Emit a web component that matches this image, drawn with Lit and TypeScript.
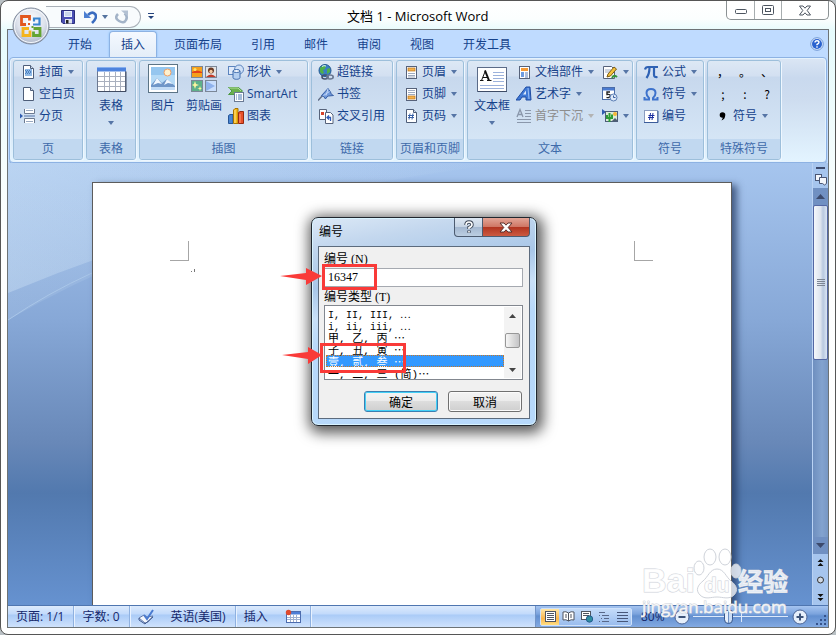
import { LitElement, html, css, svg, nothing } from "lit";
import { customElement, property } from "lit/decorators.js";
import { classMap } from "lit/directives/class-map.js";

const I = (body: unknown, w = 16, h = 16) =>
  html`<svg width=${w} height=${h} viewBox="0 0 ${w} ${h}" aria-hidden="true">${body}</svg>`;

const sheet = svg`<path d="M3.5 1.5h7l3 3v10h-10z" fill="#fff" stroke="#4d5d78"/><path d="M10.500 1.500v3h3" fill="#cfdcee" stroke="#4d5d78"/>`;
const plainSheet = svg`<rect x="3.500" y="2.500" width="10" height="12" fill="#fff" stroke="#56627a"/>`;

const icons: Record<string, unknown> = {
  cover: I(svg`${sheet}<rect x="5" y="5" width="7" height="7" fill="#8fb9e6"/><path d="M5 6l2 2-2 2m2-4l2 2-2 2m2-4l2 2-2 2" stroke="#3d72b5" stroke-width=".8" fill="none"/>`),
  blank: I(sheet),
  pagebreak: I(svg`<path d="M0 5.500l3 2.500-3 2.500z" fill="#2f5cb0"/><path d="M4.500 1v4.500h10V1M4.500 15v-4.500h10V15" fill="#fff" stroke="#6c7a90"/><path d="M6 2.500h7M6 13.500h7" stroke="#9aa9c0"/><path d="M4 8h11" stroke="#5775a8"/>`),
  shapes: I(svg`<rect x=".5" y="2.500" width="8" height="8" fill="#dfeafa" stroke="#5b84be"/><circle cx="11" cy="5.500" r="4.500" fill="#cfe0f6" stroke="#5b84be"/><path d="M5 7v6.500c0 2.400 7 2.400 7 0V7z" fill="#b4cff0" stroke="#416eae"/><ellipse cx="8.500" cy="7" rx="3.500" ry="1.500" fill="#f2f8ff" stroke="#416eae"/>`),
  smartart: I(svg`<path d="M.5 1.500h10l4 3.500-4 3.500H.5L4 5z" fill="#6bb04f" stroke="#4f9a45"/><path d="M1 2h9l3 3" stroke="#b2dd98" fill="none"/><rect x="6.500" y="6.500" width="9" height="9" fill="#fff" stroke="#6a7a94"/><path d="M8 9h1m1 0h4M8 11h1m1 0h4M8 13h1m1 0h4" stroke="#4a7ab5"/>`),
  chart: I(svg`<path d="M.5 7.500l1.500-1h3v9H.5z" fill="#4a86d2" stroke="#265596"/><path d="M5.500 2l1.500-1.500h3v15H5.500z" fill="#f5b818" stroke="#a87300"/><path d="M7 2v13" stroke="#ffe28a"/><path d="M10.500 4.500l1.500-1h3.500v12h-5z" fill="#e8502a" stroke="#97290f"/><path d="M12 6v9" stroke="#ff9c78"/>`),
  link: I(svg`<circle cx="7" cy="6.500" r="6" fill="#3a7fc4" stroke="#21598f"/><path d="M2 4c2-3 5-3 6-2l-1 3-2 1 1 3-2 1-2-2zM9 5l3-1v4l-3 2z" fill="#4fb04a"/><path d="M4 2.500q2-1.500 4-.5" stroke="#dff3ff" fill="none"/><ellipse cx="7" cy="13" rx="3" ry="2" fill="none" stroke="#45526b" stroke-width="1.600"/><ellipse cx="12" cy="13" rx="3.200" ry="2" fill="none" stroke="#6a7890" stroke-width="1.600"/>`),
  bookmark: I(svg`<path d="M0 14.500L5 9" stroke="#5f6c86" stroke-width="1.400"/><path d="M10 2.500l-6.500 7q2.500.5 4 3.500 1-2.500 3-3l5-.5q-3-1-3-3.500z" fill="#6f98da" stroke="#3a61a6"/><path d="M10 3l-2 6.500M5.500 9.500l6-4" stroke="#c4d8f8"/>`),
  crossref: I(svg`<path d="M1.500 1.500h7v10h-7z" fill="#fff" stroke="#56627a"/><rect x="3" y="4" width="3" height="3" fill="#d8432a"/><path d="M7.500 4.500h5l2.500 2.500v8.500H7.500z" fill="#fff" stroke="#56627a"/><path d="M12.500 13v-3.500h-3m1.500-2l-2 2 2 2" stroke="#2d5bb8" fill="none" stroke-width="1.300"/>`),
  header: I(svg`${plainSheet}<rect x="5" y="4" width="7" height="3" fill="#f6b34c" stroke="#b9731a" stroke-width=".7"/><path d="M5 9.500h7M5 11.500h7M5 13h7" stroke="#9fabc0"/>`),
  footer: I(svg`${plainSheet}<path d="M5 4.500h7M5 6.500h7M5 8.500h7" stroke="#9fabc0"/><rect x="5" y="10" width="7" height="3" fill="#f6b34c" stroke="#b9731a" stroke-width=".7"/>`),
  pageno: I(svg`${sheet}<path d="M7 5.500l-1 6M10 5.500l-1 6M5 7.500h6M5 9.500h6" stroke="#3a62a8" fill="none"/>`),
  parts: I(svg`${plainSheet}<rect x="5" y="4" width="7" height="3" fill="#f59a36"/><rect x="5" y="8" width="3" height="5" fill="#6d9be0"/><path d="M9 9h3M9 11h3M9 13h3" stroke="#5c7fb8"/>`),
  wordart: I(svg`<path d="M0 14L10 1h4l1 13h-5v-3H6l-2 3z" fill="#3f79d6" stroke="#1f4ca2"/><path d="M7 8.500h3V4.500z" fill="#dce9fb"/><path d="M12 2l1 11" stroke="#9cc0f5"/>`),
  dropcap: I(svg`<path d="M1 9L4 1.500 7 9M2 6.500h4" stroke="#8a97ab" stroke-width="1.300" fill="none"/><path d="M9 2.500h6M9 5.500h6M9 8.500h6M1 11.500h14M1 14.500h14" stroke="#8a97ab"/>`),
  signature: I(svg`<path d="M1.500 2.500h8l3 3v9h-11z" fill="#fff" stroke="#56627a"/><path d="M3 6h6M3 8h6" stroke="#9fabc0"/><path d="M5 13l1-3 6-7 2.500 2-6 7z" fill="#f4c23c" stroke="#7c5b10"/><path d="M10 14q2-4 5-1" stroke="#35963b" stroke-width="2" fill="none"/>`),
  date: I(svg`<rect x=".5" y="1.500" width="12" height="12" fill="#fff" stroke="#4b6da8"/><rect x="1" y="2" width="11" height="2.500" fill="#4a7bd0"/><path d="M8 6H5v2.500c3-.5 3.500.5 3.300 1.700S6 12 4.500 11.300" stroke="#222" stroke-width="1.400" fill="none"/><circle cx="11.500" cy="11.500" r="3.500" fill="#dfeaf9" stroke="#5d7fb4"/><path d="M11.500 9.500v2h2" stroke="#385e9e" fill="none"/>`),
  object: I(svg`<path d="M0 1l4 3-4 3z" fill="#2f5cb0"/><rect x="3.500" y="3.500" width="12" height="10" fill="#dcebd8" stroke="#4d5d78"/><circle cx="13" cy="6" r="2" fill="#f5b636"/><path d="M7.500 14V5M5 7v3h5V6.500" stroke="#2e9b35" stroke-width="2" fill="none"/><path d="M10 13l3-3 2 2v1z" fill="#4f5f70"/>`),
  pi: I(svg`<path d="M2 5.500Q2.500 3 5 3h10" stroke="#2f62b4" stroke-width="2.200" fill="none"/><path d="M6.500 3.500Q6.500 10 3.500 14M11 3.500V11q0 2.500 3.500 2" stroke="#2f62b4" stroke-width="2.200" fill="none"/>`),
  omega: I(svg`<path d="M1.500 11v2.500H6v-1.500Q3.500 10 3.500 7 3.500 3 8 3t4.500 4q0 3-2.500 5v1.500h4.500V11" stroke="#3d72cc" stroke-width="2" fill="none"/>`),
  number: I(svg`<rect x="1.500" y="2.500" width="13" height="12" fill="#fff" stroke="#8a9cc0"/><path d="M1 14.500h14V3" stroke="#3b5c9a" fill="none"/><path d="M7.500 5l-1 7M10 5l-1 7M5.500 7.500h6M5 9.500h6" stroke="#1c2fa0"/>`),
  comma: I(svg`<circle cx="8.500" cy="7" r="2.800" fill="#000"/><path d="M11 7q.5 4-3.500 5.500Q9.500 10 8.500 8z" fill="#000"/>`),
};

const big: Record<string, unknown> = {
  table: I(svg`<rect x="2.500" y="4.500" width="28" height="24" fill="#fff" stroke="#6c7890"/><rect x="2" y="4" width="29" height="4.500" fill="#4e83dd"/><path d="M2 4.500h29" stroke="#86afee"/><path d="M3 13.500h27M3 18.500h27M3 23.500h27M9.500 9v19M14.500 9v19M20.500 9v19M25.500 9v19" stroke="#a9b0be"/><path d="M3 28.500h28v-20" stroke="#414c62" fill="none"/>`, 32, 32),
  picture: I(svg`<rect x="1.500" y="1.500" width="29" height="28" fill="#fff" stroke="#5c7486"/><rect x="4" y="4" width="24" height="23" fill="#b5daf6"/><rect x="4" y="4" width="24" height="8" fill="#95c6ef"/><circle cx="20.500" cy="9.500" r="3.500" fill="#fff1ce" stroke="#f0a064"/><path d="M4 22l6-7 5 5 5-4 8 7v4H4z" fill="#6f96c8"/><path d="M10 15l5 6-4-1-5 2zM20 16l6 5-5-1-4 2z" fill="#f0f7ff"/><path d="M4 24h24v3H4z" fill="#c3dcf6"/>`, 32, 32),
  clip: I(svg`<rect x="3.500" y="3.500" width="11" height="11" fill="#f5a01c" stroke="#7b8797"/><path d="M4 9q5-3 10 0v1H4z" fill="#e3401a"/><circle cx="7" cy="6.500" r="1.500" fill="#ffe468"/><rect x="17.500" y="3.500" width="11" height="11" fill="#e4e4e4" stroke="#7b8797"/><circle cx="23" cy="7.500" r="3" fill="#6b3a24"/><circle cx="23" cy="8.500" r="1.700" fill="#f3c79c"/><path d="M18 14q5-5 10 0z" fill="#c23a26"/><rect x="3.500" y="17.500" width="11" height="11" fill="#5eb08b" stroke="#7b8797"/><path d="M7 18l1 3 3 1-3 1-1 3-1-3-2-1 2-1zM12 23l.7 2 1.300.5-1.300.5-.7 2-.7-2-2-.5 2-.5z" fill="#fdf6a0"/><rect x="17.500" y="17.500" width="11" height="11" fill="#c9defc" stroke="#7b8797"/><path d="M18 18l9 5-9 5z" fill="#8fb2ec"/>`, 32, 32),
  textbox: I(svg`<rect x="2.500" y="4.500" width="29" height="24" fill="#fff" stroke="#5b6b88"/><path d="M3 28.500h29" stroke="#3e4c66"/><path d="M6.500 17.500l4-10" stroke="#111" fill="none"/><path d="M10 7.500l4 10" stroke="#111" stroke-width="2" fill="none"/><path d="M8 14.500h5M5 17.500h3.500M12 17.500h4.500" stroke="#111"/><path d="M18 9.500h11M18 12.500h11M18 15.500h11M18 18.500h11M5 22.500h24M5 25.500h24" stroke="#9cb2dc"/>`, 34, 32),
};

interface Item { icon: string; text?: string; menu?: boolean; off?: boolean; label?: string }

@customElement("ribbon-button")
class RibbonButton extends LitElement {
  static styles = css`
    :host { display: block; }
    .small, .large {
      border: 0; background: none; padding: 0; margin: 0; color: #15428b;
      font: 12px/22px "Open Sans", "Noto Sans CJK SC", sans-serif; white-space: nowrap;
    }
    .small { display: flex; align-items: center; gap: 3px; height: 22px; }
    .large { display: flex; flex-direction: column; align-items: center; width: 100%; padding-top: 2px; }
    .off { color: #8d8d8d; }
    svg { display: block; flex: none; }
    .caret { flex: none; width: 6px; height: 4px; background: #5675a6; clip-path: polygon(0 0, 100% 0, 50% 100%); margin-left: 2px; }
    .large .caret { margin: 4px 0 0; }
    .off .caret { background: #b3b3b3; }
  `;
  @property({ attribute: false }) item: Item = { icon: "" };
  @property({ type: Boolean }) large = false;
  render() {
    const { icon, text, menu, off, label } = this.item;
    return html`<button
      class=${classMap({ small: !this.large, large: this.large, off: !!off })}
      ?disabled=${off} aria-label=${label ?? text ?? ""}>
      ${this.large ? big[icon] : icons[icon]}
      ${text ? html`<span>${text}</span>` : nothing}
      ${menu ? html`<i class="caret"></i>` : nothing}
    </button>`;
  }
}

@customElement("number-dialog")
class NumberDialog extends LitElement {
  static styles = css`
    :host { display: block; box-sizing: border-box; width: 226px; border: 1px solid #20262e; border-radius: 7px;
      background: linear-gradient(170deg, #dbe8f6 0, #c3d7ee 30px, #a9c7e8 70px, #c9e0f8 100px, #b7d8fa 130px, #b7d9fb 100%);
      box-shadow: inset 0 0 0 1px #d8f3ff, 2px 3px 14px 4px rgba(0, 0, 0, .65);
      padding: 0 6px 6px; color: #000; font: 12px/14px "Liberation Serif", "Noto Sans CJK SC", serif; }
    * { box-sizing: border-box; }
    .title { display: flex; height: 28px; }
    .title h2 { flex: 1; margin: 0; padding: 5px 0 0 1px; font: 12px/16px "Noto Sans CJK SC", sans-serif; }
    .ctl { height: 19px; border: 1px solid #4c5b70; border-top: 0; padding: 0; display: grid; place-items: center; }
    .help { width: 29px; border-radius: 0 0 0 4px; background: linear-gradient(#dde7f2, #c5d3e4 50%, #a3b7d0 50%, #bccee2); }
    .close { width: 47px; border-left: 0; border-radius: 0 0 4px 0; background: linear-gradient(#e2a597, #cf7563 50%, #b1331f 50%, #cc5a41); }
    .client { border: 1px solid #5c6b7d; background: #f0f0f0; padding: 4px 6px 6px 5px; }
    label { display: block; height: 16px; line-height: 16px; }
    .field { display: block; width: 100%; height: 19px; margin: 1px 0 2px; border: 1px solid #a5a9b0; border-radius: 0; padding: 0 3px;
      font: inherit; background: #fff; outline: 0; }
    .list { display: flex; height: 75px; border: 1px solid #82878f; background: #fff; padding: 1px; }
    select { flex: 1; min-width: 0; height: 72px; border: 0; padding: 0; outline: 0; overflow: hidden; background: #fff;
      border-radius: 0; font: 11px/12px "Liberation Mono", "Noto Sans CJK SC", monospace; scrollbar-width: none; color: #000; }
    option { display: flex; align-items: center; overflow: visible; height: 12px; min-height: 12px; line-height: 12px; padding: 0 2px; white-space: pre; color: #000; }
    .latin { font-size: 10px; }
    option:checked { background: linear-gradient(#3399ff, #3399ff); -webkit-text-fill-color: #fff; outline: 1px dotted #c87828; outline-offset: -1px; }
    .bar { width: 17px; display: flex; flex-direction: column; align-items: center; background: #f3f3f3; padding: 7px 0 6px; }
    .up, .down { width: 7px; height: 4px; background: #444; clip-path: polygon(50% 0, 100% 100%, 0 100%); }
    .down { clip-path: polygon(0 0, 100% 0, 50% 100%); margin-top: auto; }
    .thumb { width: 15px; height: 15px; margin-top: 15px; border: 1px solid #979797; border-radius: 2px; background: linear-gradient(90deg, #f6f6f6, #dcdcdc 50%, #c4c4c6); }
    .actions { display: flex; justify-content: flex-end; gap: 10px; padding: 11px 1px 0 0; }
    .actions button { width: 74px; height: 21px; padding: 0; border: 1px solid #707070; border-radius: 3px; font: 12px/17px "Noto Sans CJK SC", sans-serif; color: #000;
      background: linear-gradient(#f3f3f3, #ebebeb 50%, #dddddd 50%, #cfcfcf); box-shadow: inset 0 0 0 1px #fbfbfb; }
    .actions .ok { border-color: #3c7fb1; box-shadow: inset 0 0 0 1px #43d0f7; }
  `;
  render() {
    return html`
      <div class="title">
        <h2>编号</h2>
        <button class="ctl help" aria-label="帮助">${I(svg`<path d="M4 5q0-3 3-3t3 2.700Q10 6.500 7 7.500V9M7 10.500v2.200" stroke="#3c4656" stroke-width="3.400" fill="none"/><path d="M4 5q0-3 3-3t3 2.700Q10 6.500 7 7.500V9M7 11v1.500" stroke="#fff" stroke-width="1.600" fill="none"/>`, 14, 14)}</button>
        <button class="ctl close" aria-label="关闭">${I(svg`<path d="M1 1h4l2 2.200L9 1h4L9.200 5.500 13 10H9L7 7.800 5 10H1l3.800-4.500z" fill="#fff" stroke="#57302c"/>`, 14, 11)}</button>
      </div>
      <div class="client">
        <label for="num">编号 (N)</label>
        <input class="field" id="num" type="text" value="16347" />
        <label for="kind">编号类型 (T)</label>
        <div class="list">
          <select id="kind" size="6">
            <option class="latin">I, II, III, ⋯</option>
            <option class="latin">i, ii, iii, ⋯</option>
            <option>甲, 乙, 丙 ⋯</option>
            <option>子, 丑, 寅 ⋯</option>
            <option selected>壹, 贰, 叁 ⋯</option>
            <option>一, 二, 三 (简)⋯</option>
          </select>
          <div class="bar"><i class="up"></i><i class="thumb"></i><i class="down"></i></div>
        </div>
        <div class="actions"><button class="ok">确定</button><button>取消</button></div>
      </div>`;
  }
}

@customElement("app-root")
class AppRoot extends LitElement {
  static styles = css`
    :host { display: block; background: #b9c0c4; color: #15428b; font: 12px/16px "Open Sans", "Noto Sans CJK SC", sans-serif; }
    * { box-sizing: border-box; }
    svg { display: block; flex: none; }
    button { font: inherit; color: inherit; border: 0; background: none; padding: 0; margin: 0; white-space: nowrap; }
    .window { position: relative; display: flex; flex-direction: column; min-height: 100vh; padding: 0 6px 6px;
      border: 1px solid #565656; border-radius: 8px; overflow: hidden;
      background: linear-gradient(#ffffff 0, #fbfefe 18px, #e6fbfc 30px, #fdfefe 240px, #fff 100%); }
    .titlebar { display: flex; height: 28px; align-items: flex-start; color: #000; }
    .quick { display: flex; align-items: center; height: 22px; margin: 5px 0 0 39px; padding: 0 11px 0 15px; border: 1px solid #a9b0b8; border-left: 0; border-radius: 0 11px 11px 0; background: #f8fbfd; }
    .quick .caret { margin: 0 7px 0 5px; }
    .quick button + button { margin-left: 8px; }
    .caret { width: 6px; height: 4px; background: #55739f; clip-path: polygon(0 0, 100% 0, 50% 100%); }
    .more { margin: 12px 0 0 7px; }
    .titlebar h1 { flex: 1; margin: 0; padding: 7px 0 0 193px; font: 13px/16px "Open Sans", "Noto Sans CJK SC", sans-serif; }
    .controls { display: flex; height: 19px; border: 1px solid #8b9193; border-top: 0; border-radius: 0 0 5px 5px; background: #fff; }
    .controls button { width: 27px; display: grid; place-items: center; }
    .controls button + button { border-left: 1px solid #a7adaf; }
    .controls .x { width: 47px; }
    .orb { position: absolute; left: 11px; top: 6px; }
    .app { flex: 1; display: flex; flex-direction: column; border: 1px solid #6d7376; background: #bfdbff; }
    .tabs { display: flex; height: 27px; align-items: flex-end; padding: 0 4px 0 48px; gap: 5px; }
    .tabs button { height: 26px; padding: 0 11px 1px; line-height: 25px; border: 1px solid transparent; border-bottom: 0; }
    .tabs .on { border-color: #8db2e3; border-radius: 4px 4px 0 0; background: linear-gradient(#f4f9ff, #e4edf8); box-shadow: 0 0 2px #7bbcf2; }
    .tabs .q { margin-left: auto; padding: 0; height: 14px; border: 0; align-self: center; }
    .ribbon { display: flex; gap: 3px; padding: 2px 3px; margin: 0 1px 0 1px; border: 1px solid #8db2e3; border-radius: 4px; overflow: hidden;
      background: linear-gradient(#dbe6f4, #c9d9ee 20px, #cddcef 40px, #e3f4ff); box-shadow: inset 0 0 0 1px #e4f2fd, 0 1px 0 #85a9d8; }
    .group { flex: none; display: flex; flex-direction: column; height: 100px; border: 1px solid #9dbfdb; border-radius: 3px; box-shadow: 1px 1px 0 #eef7ff; overflow: hidden;
      background: linear-gradient(#dde8f5, #d3e0f1 15px, #c7d8ed 16px, #d9e9f8); }
    .body { flex: 1; display: flex; padding: 0 0 0 6px; }
    .group h3 { margin: 0; height: 20px; font: 12px/19px "Open Sans", "Noto Sans CJK SC", sans-serif; text-align: center; color: #3e6aaa; background: #c1d8f0; }
    .w70 { width: 70px; } .w50 { width: 50px; } .w169 { width: 169px; } .w82 { width: 82px; } .w68 { width: 68px; } .w166 { width: 166px; } .w74 { width: 74px; }
    .flush { padding: 0 3px; }
    .lg { width: 42px; margin-right: 3px; }
    .wide { width: 100%; }
    .first { width: 40px; margin: 0; }
    .col + .col { margin-left: 8px; }
    .marks { display: flex; color: #000; font: 12px/22px "Noto Sans CJK SC", sans-serif; margin-left: -2px; }
    .marks button { width: 22px; height: 22px; }
    .work { position: relative; flex: 1; display: flex; min-height: 300px; overflow: hidden; border-bottom: 1px solid #4f76b0;
      background: linear-gradient(#a6c5ee 0, #87a8d7 157px, #6888b8 280px, #5279ae 330px, #6692d0 100%); }
    .swoosh { position: absolute; left: 0; top: 0; }
    .page { position: relative; flex: 1; margin: 19px 80px 0 84px; border: 1px solid #5c5c5c; border-bottom: 0; background: #fff; box-shadow: 5px 3px 7px rgba(30, 50, 90, .7);
      display: flex; justify-content: space-between; padding: 58px 78px 0 77px; }
    .corner { width: 19px; height: 20px; border: solid #a6a6a6; border-width: 0 1px 1px 0; }
    .corner.r { border-width: 0 0 1px 1px; }
    .caretmark { margin-right: auto; }
    .scroll { position: relative; width: 16px; display: flex; flex-direction: column; align-items: center; background: #a6c5ee; border-left: 1px solid #b9d2f4; }
    .split { width: 9px; height: 2px; background: #3c4a6c; margin: 4px 0 4px; }
    .track { flex: 1; width: 15px; margin-top: 2px; display: flex; flex-direction: column; align-items: center; background: linear-gradient(90deg, #6e8fbf, #83a3cf 60%, #7797c4); }
    .arrow { width: 15px; height: 17px; display: grid; place-items: center; background: #7090c2; }
    .arrow i { width: 9px; height: 5px; background: #3c4a6c; clip-path: polygon(50% 0, 100% 100%, 0 100%); }
    .arrow.d { margin-top: auto; }
    .arrow.d i { clip-path: polygon(0 0, 100% 0, 50% 100%); }
    .thumb { width: 15px; height: 155px; border: 1px solid #5468a4; border-radius: 2px; background: linear-gradient(90deg, #f4f7fb, #dde4ee 50%, #b9c9e0 70%, #dbe6f4); display: grid; place-items: center; }
    .grip { width: 8px; height: 8px; background: repeating-linear-gradient(#7d8694 0 1px, transparent 1px 2px); }
    .jump { display: flex; flex-direction: column; gap: 9px; padding: 5px 0 4px; }
    .status { display: flex; height: 21px; color: #15286b; background: linear-gradient(#dceafc, #c2dafb 8px, #aacbf7 9px, #cfe2fc); }
    .status span { display: flex; align-items: center; border-right: 1px solid #8fb1e0; box-shadow: 1px 0 0 #e8f2ff; padding: 0 9px 0 8px; }
    .status .bare { border: 0; box-shadow: none; }
    .right { margin-left: auto; flex: 0 0 293px; display: flex; align-items: center; padding: 0 0 0 4px; border-left: 1px solid #7395c8; background: linear-gradient(#a5c4f0, #7ba3dd 8px, #628fd0 10px, #83aae2); }
    .views { display: flex; height: 18px; border: 1px solid #cfe2fb; border-radius: 2px; background: linear-gradient(#c4dbf9, #9abdee); }
    .views button { width: 18px; display: grid; place-items: center; }
    .views .sel { background: linear-gradient(#ffe7a8, #fbb54a 60%, #ffdf85); }
    .pct { padding: 0 9px 0 9px; }
    .zoom { position: relative; flex: 1; display: flex; align-items: center; min-width: 0; padding: 0 4px 0 3px; }
    .zoom::before { content: ""; position: absolute; left: 51px; top: 50%; margin-top: -4px; width: 1px; height: 9px; background: #dce9fb; }
    .zoom input { width: 100%; height: 16px; margin: 0; appearance: none; background: linear-gradient(#dce9fb, #dce9fb) center / 100% 1px no-repeat; }
    .zoom input::-webkit-slider-thumb { appearance: none; width: 9px; height: 14px; border: 1px solid #39578c; border-radius: 2px 2px 5px 5px; background: linear-gradient(90deg, #e6f0fc 40%, #6d90c4 40% 60%, #c8dcf6 60%); }
    .sz { margin: 8px 0 0 8px; }
    number-dialog { position: absolute; left: 310px; top: 216px; }
    .note { position: absolute; left: 278px; top: 261px; pointer-events: none; }
    .mark { position: absolute; right: 34px; bottom: 6px; pointer-events: none; }
    .mark text { font-family: "Liberation Sans", "Noto Sans CJK SC", sans-serif; font-weight: 700; fill: #fff; fill-opacity: .82; stroke: #cfd3da; stroke-width: 1; paint-order: stroke; }
    .mark .url { font-weight: 400; font-family: "Open Sans", sans-serif; stroke-width: 1; }
  `;

  private col(items: Item[]) {
    return html`<div class="col">${items.map((i) => html`<ribbon-button .item=${i}></ribbon-button>`)}</div>`;
  }
  private group(title: string, size: string, body: unknown, flush = false) {
    return html`<section class="group ${size}"><div class=${classMap({ body: true, flush })}>${body}</div><h3>${title}</h3></section>`;
  }

  render() {
    const tabs = ["开始", "插入", "页面布局", "引用", "邮件", "审阅", "视图", "开发工具"];
    return html`<div class="window">
      <header class="titlebar">
        <div class="quick">
          <button aria-label="保存">${I(svg`<path d="M.5 1.500h13v13H2l-1.500-1.500z" fill="#4a4fb4" stroke="#2b2f7c"/><rect x="3" y="2" width="8" height="6" fill="#e9f0fb"/><path d="M4 4h6M4 6h6" stroke="#a9bbdc"/><rect x="4" y="10" width="7" height="4.500" fill="#dfe3ee"/><rect x="5" y="11" width="2.500" height="3.500" fill="#222"/>`, 14, 16)}</button>
          <button aria-label="撤消">${I(svg`<path d="M5 6Q9 2 12 5t-3 9" stroke="#3b6cc0" stroke-width="2.600" fill="none"/><path d="M1 2v7h7z" fill="#4c7fd2"/>`, 14, 16)}</button>
          <i class="caret"></i>
          <button aria-label="恢复">${I(svg`<path d="M9.500 4.500Q13 7 11 11T4 12 3 5" stroke="#a3b3c8" stroke-width="2.600" fill="none"/><path d="M6 1.500h7v6z" fill="#b3c1d3"/>`, 14, 16)}</button>
        </div>
        <button class="more" aria-label="自定义快速访问工具栏">${I(svg`<path d="M0 .5h6" stroke="#24437c"/><path d="M0 3h6L3 6z" fill="#24437c"/>`, 6, 6)}</button>
        <h1>文档 1 - Microsoft Word</h1>
        <div class="controls">
          <button aria-label="最小化">${I(svg`<rect x="1.500" y="6.500" width="11" height="4" rx="1" fill="#fff" stroke="#4d5560"/>`, 14, 14)}</button>
          <button aria-label="最大化">${I(svg`<rect x="1.500" y="2.500" width="11" height="9" rx="1" fill="#fff" stroke="#4d5560"/><rect x="4.500" y="5.500" width="5" height="3" fill="#fff" stroke="#4d5560"/>`, 14, 14)}</button>
          <button class="x" aria-label="关闭">${I(svg`<path d="M1.500 1h3.500l2 2.200L9 1h3.500L9.200 5.500 12.500 10H9L7 7.800 5 10H1.500l3.300-4.500z" fill="#fff" stroke="#4d5560"/>`, 14, 11)}</button>
        </div>
      </header>
      <div class="app">
        <nav class="tabs" role="tablist">
          ${tabs.map((t, i) => html`<button role="tab" class=${classMap({ on: i === 1 })}>${t}</button>`)}
          <button class="q" aria-label="帮助">${I(svg`<circle cx="7" cy="7" r="6.300" fill="#dfeafc" stroke="#6f97d4"/><circle cx="7" cy="7" r="5" fill="#2a62cf"/><path d="M5 5.500Q5 3.700 7 3.700t2 1.600Q9 6.500 7 7.500V8.300M7 9.300v1.400" stroke="#fff" stroke-width="1.400" fill="none"/>`, 14, 14)}</button>
        </nav>
        <div class="ribbon">
          ${this.group("页", "w70", this.col([{ icon: "cover", text: "封面", menu: true }, { icon: "blank", text: "空白页" }, { icon: "pagebreak", text: "分页" }]))}
          ${this.group("表格", "w50", html`<ribbon-button class="wide" large .item=${{ icon: "table", text: "表格", menu: true }}></ribbon-button>`, true)}
          ${this.group("插图", "w169", html`
            <ribbon-button class="lg first" large .item=${{ icon: "picture", text: "图片" }}></ribbon-button>
            <ribbon-button class="lg" large .item=${{ icon: "clip", text: "剪贴画" }}></ribbon-button>
            ${this.col([{ icon: "shapes", text: "形状", menu: true }, { icon: "smartart", text: "SmartArt" }, { icon: "chart", text: "图表" }])}`, true)}
          ${this.group("链接", "w82", this.col([{ icon: "link", text: "超链接" }, { icon: "bookmark", text: "书签" }, { icon: "crossref", text: "交叉引用" }]))}
          ${this.group("页眉和页脚", "w68", this.col([{ icon: "header", text: "页眉", menu: true }, { icon: "footer", text: "页脚", menu: true }, { icon: "pageno", text: "页码", menu: true }]))}
          ${this.group("文本", "w166", html`
            <ribbon-button class="lg" large .item=${{ icon: "textbox", text: "文本框", menu: true }}></ribbon-button>
            ${this.col([{ icon: "parts", text: "文档部件", menu: true }, { icon: "wordart", text: "艺术字", menu: true }, { icon: "dropcap", text: "首字下沉", menu: true, off: true }])}
            ${this.col([{ icon: "signature", menu: true, label: "签名行" }, { icon: "date", label: "日期和时间" }, { icon: "object", menu: true, label: "对象" }])}`, true)}
          ${this.group("符号", "w68", this.col([{ icon: "pi", text: "公式", menu: true }, { icon: "omega", text: "符号", menu: true }, { icon: "number", text: "编号" }]))}
          ${this.group("特殊符号", "w74", html`<div>
            <div class="marks"><button>，</button><button>。</button><button>、</button></div>
            <div class="marks"><button>;</button><button>:</button><button>?</button></div>
            <ribbon-button .item=${{ icon: "comma", text: "符号", menu: true }}></ribbon-button></div>`)}
        </div>
        <main class="work">
          <svg class="swoosh" width="804" height="170" viewBox="0 0 804 170" aria-hidden="true">
            <defs><linearGradient id="sw" x1="0" x2="1"><stop offset="0" stop-color="#cfe3f6" stop-opacity=".4"/><stop offset="1" stop-color="#cfe3f6" stop-opacity="0"/></linearGradient></defs>
            <path d="M0 130Q240 30 500 0H0z" fill="url(#sw)"/><path d="M0 157Q200 40 500 0H0z" fill="url(#sw)" opacity=".4"/><path d="M0 157Q40 130 84 110" stroke="#a9c6e8" fill="none"/>
          </svg>
          <div class="page">
            <i class="corner"></i>
            <svg class="caretmark" width="6" height="32" viewBox="0 0 6 32" aria-hidden="true"><path d="M2 30.500h1M5.500 28v3" stroke="#777"/></svg>
            <i class="corner r"></i>
          </div>
          <div class="scroll">
            <i class="split"></i>
            ${I(svg`<rect x=".5" y="1.500" width="6" height="6" fill="#f3f6fb" stroke="#4a5674"/><path d="M4.500 4.500h7v6l-2 1.500-2-1.500h-3z" fill="#f3f6fb" stroke="#4a5674"/>`, 12, 13)}
            <div class="track"><div class="arrow"><i></i></div><div class="thumb"><i class="grip"></i></div><div class="arrow d"><i></i></div></div>
            <div class="jump">
              ${I(svg`<path d="M3.500 0l3 3h-6zM3.500 4l3 3h-6z" fill="#111"/>`, 7, 8)}
              ${I(svg`<circle cx="3.500" cy="4" r="3" fill="#cfd8e4" stroke="#333"/>`, 7, 8)}
              ${I(svg`<path d="M3.500 4l3-3h-6zM3.500 8l3-3h-6z" fill="#111"/>`, 7, 8)}
            </div>
          </div>
        </main>
        <footer class="status">
          <span>页面: 1/1</span><span>字数: 0</span>
          <span class="bare">${I(svg`<path d="M1 9l5-3 3 2 6-1-5 6-3 1z" fill="#f4f7fc" stroke="#6479a6"/><path d="M1 9v2l6 4 1-1 7-6" fill="none" stroke="#40598f"/><path d="M6 6l3 4 6-9" stroke="#4a7bd0" stroke-width="2" fill="none"/>`, 16, 16)}</span>
          <span>英语(美国)</span><span class="bare">插入</span>
          <span>${I(svg`<rect x="1.500" y="2.500" width="14" height="11" fill="#fff" stroke="#4d6cae"/><rect x="2" y="3" width="13" height="2.500" fill="#4d7ed6"/><path d="M2 8.500h13M2 10.500h13M5.500 6v7M8.500 6v7M11.500 6v7" stroke="#9fb0cf"/><circle cx="3.500" cy="3.500" r="2.700" fill="#e0492c"/>`, 16, 16)}</span>
          <div class="right">
            <div class="views">
              <button class="sel" aria-label="页面视图">${I(svg`<rect x="1.500" y="1.500" width="10" height="10" fill="#fff" stroke="#4f5560"/><path d="M3 3.500h7M3 5.500h7M3 7.500h7M3 9.500h7" stroke="#4f5560"/>`, 13, 13)}</button>
              <button aria-label="阅读版式">${I(svg`<path d="M1 2q3-1 5.500 1Q9 1 12 2v8q-3-1-5.500 1Q4 9 1 10zM6.500 3v8" fill="#fff" stroke="#4f5560"/><path d="M3 5h2M3 7h2M8 5h2M8 7h2" stroke="#4f5560"/>`, 13, 13)}</button>
              <button aria-label="Web 版式">${I(svg`<rect x="1.500" y="1.500" width="9" height="8" fill="#fff" stroke="#4f5560"/><path d="M3 3.500h6M3 5.500h6" stroke="#4f5560"/><circle cx="9.500" cy="9" r="3.200" fill="#2f8fa0" stroke="#235c90"/>`, 13, 13)}</button>
              <button aria-label="大纲">${I(svg`<path d="M1 2.500h6M4 5.500h7M6 8.500h5M4 11.500h7M1 5.500h1M3 8.500h1M1 11.500h1" stroke="#58688a"/>`, 13, 13)}</button>
              <button aria-label="草稿">${I(svg`<path d="M1 2.500h11M1 5.500h11M1 8.500h11M1 11.500h11" stroke="#47577a"/>`, 13, 13)}</button>
            </div>
            <div class="pct">80%</div>
            <button aria-label="缩小">${I(svg`<circle cx="8" cy="8" r="7" fill="#e6effb" stroke="#4a6394"/><path d="M4.500 8h7" stroke="#3d5379" stroke-width="2"/>`)}</button>
            <div class="zoom"><input type="range" aria-label="显示比例" min="0" max="100" value="36" /></div>
            <button aria-label="放大">${I(svg`<circle cx="8" cy="8" r="7" fill="#e6effb" stroke="#4a6394"/><path d="M4.500 8h7M8 4.500v7" stroke="#3d5379" stroke-width="2"/>`)}</button>
            <div class="sz">${I(svg`<path d="M8 0h2v2H8zM4 4h2v2H4zM8 4h2v2H8zM0 8h2v2H0zM4 8h2v2H4zM8 8h2v2H8z" fill="#36538c"/>`, 12, 11)}</div>
          </div>
        </footer>
      </div>
      <button class="orb" aria-label="Office 按钮">
        <svg width="38" height="38" viewBox="0 0 38 38">
          <defs><radialGradient id="orb" cx=".5" cy=".35" r=".65"><stop offset="0" stop-color="#fff"/><stop offset=".6" stop-color="#dde2ec"/><stop offset="1" stop-color="#a9b3c6"/></radialGradient></defs>
          <circle cx="19" cy="19" r="18" fill="url(#orb)" stroke="#7d8798"/><circle cx="19" cy="19" r="16.500" fill="none" stroke="#f5f8fc"/>
          <g fill="none" stroke-width="2.800"><path d="M14 17.500H9.500v-8h8v4" stroke="#e2571e"/><path d="M21 17.500h6.500v-6H22v3" stroke="#3b86cf" stroke-width="2.200"/><path d="M17 21.500h-6v7h7v-5" stroke="#f4b41c"/><path d="M21.500 21.500h6.500v7h-6.500v-4" stroke="#64a432"/></g>
          <path d="M16 16h2v2h-2z" fill="#e2571e"/><path d="M19.500 19h2v2h-2z" fill="#64a432"/>
        </svg>
      </button>
      <number-dialog></number-dialog>
      <svg class="note" width="130" height="114" viewBox="0 0 130 114" aria-hidden="true">
        <g fill="none" stroke="#f93a38" stroke-width="3"><rect x="44.500" y="3.500" width="52" height="23"/><rect x="42.500" y="82.500" width="83" height="27"/></g>
        <g fill="#f93a38"><path d="M1 14l26-3V6l16 8-16 9v-5z"/><path d="M3 93l26-3v-5l14 8-14 9v-5z"/></g>
      </svg>
      <svg class="mark" width="160" height="84" viewBox="0 0 160 84">
        <g fill="#fff" fill-opacity=".75" stroke="#cfd3da"><ellipse cx="58" cy="24" rx="5" ry="7"/><ellipse cx="69" cy="13" rx="6" ry="8"/><ellipse cx="84" cy="13" rx="6" ry="8"/><ellipse cx="95" cy="27" rx="5" ry="7"/><path d="M76 25c7 0 9 8 14 12s8 9 3 14-11 2-17 2-12 3-17-2-2-10 3-14 7-12 14-12z"/></g>
        <text x="1" y="48" font-size="34">Bai</text><text x="63" y="48" font-size="21">du</text><text x="97" y="47" font-size="25">经验</text>
        <text class="url" x="1" y="69" font-size="17">jingyan.baidu.com</text>
      </svg>
    </div>`;
  }
}
